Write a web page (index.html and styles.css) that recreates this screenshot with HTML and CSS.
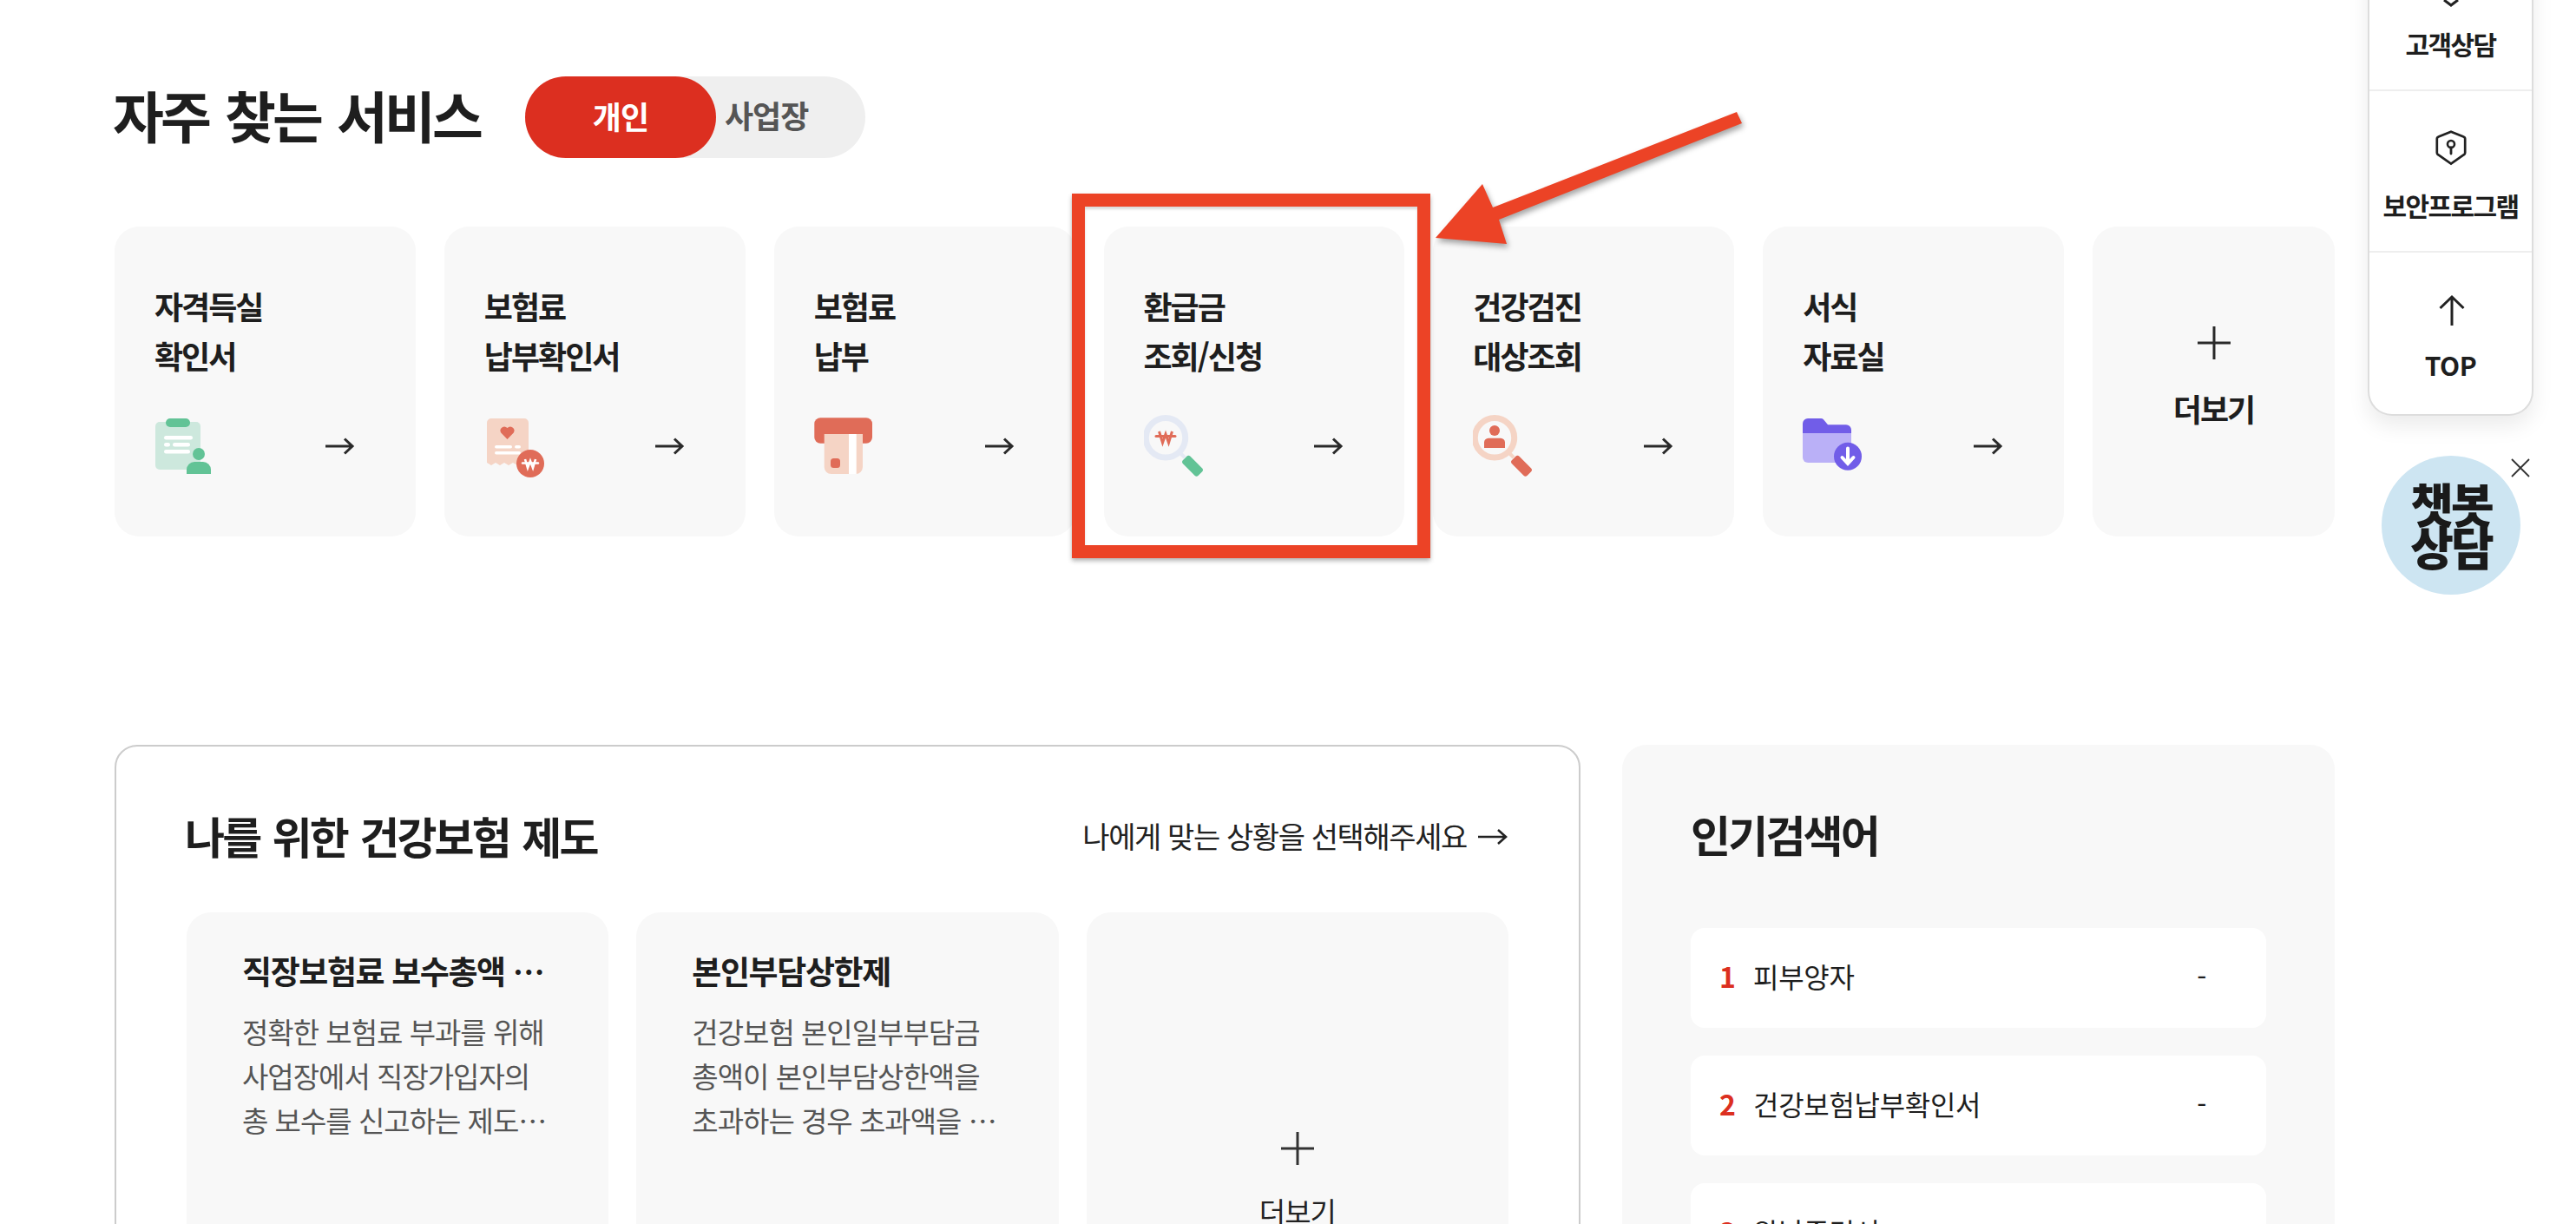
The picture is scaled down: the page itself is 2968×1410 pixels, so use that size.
FILE: index.html
```html
<!DOCTYPE html>
<html lang="ko">
<head>
    <meta charset="UTF-8">
    <meta name="viewport" content="width=device-width, initial-scale=1.0">
    <title>자주 찾는 서비스</title>
    <link rel="stylesheet" href="styles.css">
</head>
<body>
<div class="page">
    <!-- 자주 찾는 서비스 -->
    <section class="services">
        <div class="services-head">
            <h2 class="services-title">자주 찾는 서비스</h2>
            <div class="toggle">
                <span class="toggle-on">개인</span>
                <span class="toggle-off">사업장</span>
            </div>
        </div>
        <div class="service-grid">
            <a class="service-card">
                <strong>자격득실<br>확인서</strong>
                <div class="service-foot">
                    <svg class="service-icon" viewBox="0 0 72 72">
                        <rect x="1" y="8" width="52" height="55" rx="5" fill="#cde8dd"/>
                        <rect x="13" y="4" width="28" height="10" rx="5" fill="#62c396"/>
                        <g fill="#fff">
                            <rect x="11" y="24" width="33" height="4.6" rx="2.3"/>
                            <rect x="11" y="32" width="7" height="4.4" rx="2.2"/>
                            <rect x="21" y="32" width="20" height="4.4" rx="2.2"/>
                            <rect x="11" y="40" width="30" height="4.4" rx="2.2"/>
                        </g>
                        <circle cx="51" cy="45" r="7" fill="#62c396"/>
                        <path d="M37 68v-5a9 9 0 0 1 9-9h10a9 9 0 0 1 9 9v5z" fill="#62c396"/>
                    </svg>
                    <svg class="arrow-icon" viewBox="0 0 36 36"><path d="M2 18h31M24 9.500l9 8.500-9 8.500" fill="none" stroke="#2a2a2a" stroke-width="3"/></svg>
                </div>
            </a>
            <a class="service-card">
                <strong>보험료<br>납부확인서</strong>
                <div class="service-foot">
                    <svg class="service-icon" viewBox="0 0 72 72">
                        <path d="M3 9a5 5 0 0 1 5-5h38a5 5 0 0 1 5 5v46l-4 3-4-3-5 3-5-3-5 3-5-3-5 3-5-3-5 3-5-3z" fill="#f5d4c5"/>
                        <path d="M26.500 28l-7.300-7.500a4.600 4.600 0 0 1 7.300-5.500 4.600 4.600 0 0 1 7.300 5.500z" fill="#e06c58"/>
                        <g fill="#fff">
                            <rect x="12" y="35" width="20" height="3.600" rx="1.800"/>
                            <rect x="35" y="35" width="7" height="3.600" rx="1.800"/>
                            <rect x="12" y="42" width="30" height="3.600" rx="1.800"/>
                        </g>
                        <circle cx="53" cy="56" r="16" fill="#e06c58"/>
                        <path d="M47 51l3 10 3-8 3 8 3-10" fill="none" stroke="#fff" stroke-width="2.600"/>
                        <path d="M44 55.500h18" stroke="#fff" stroke-width="2.400" stroke-linecap="round"/>
                    </svg>
                    <svg class="arrow-icon" viewBox="0 0 36 36"><path d="M2 18h31M24 9.500l9 8.500-9 8.500" fill="none" stroke="#2a2a2a" stroke-width="3"/></svg>
                </div>
            </a>
            <a class="service-card">
                <strong>보험료<br>납부</strong>
                <div class="service-foot">
                    <svg class="service-icon" viewBox="0 0 72 72">
                        <rect x="0.300" y="3.300" width="66.700" height="29.400" rx="7" fill="#e06c58"/>
                        <path d="M11.700 22H56v38a8 8 0 0 1-8 8H19.700a8 8 0 0 1-8-8z" fill="#f5d4c5"/>
                        <rect x="40" y="22" width="8.700" height="46" fill="#fff"/>
                        <rect x="19" y="50" width="11" height="11" rx="3.500" fill="#e06c58"/>
                    </svg>
                    <svg class="arrow-icon" viewBox="0 0 36 36"><path d="M2 18h31M24 9.500l9 8.500-9 8.500" fill="none" stroke="#2a2a2a" stroke-width="3"/></svg>
                </div>
            </a>
            <a class="service-card">
                <strong>환급금<br>조회/신청</strong>
                <div class="service-foot">
                    <svg class="service-icon" viewBox="0 0 72 72">
                        <circle cx="25" cy="26.300" r="22.700" fill="none" stroke="#e4e9f4" stroke-width="7"/>
                        <path d="M41 43l6 6" stroke="#e4e9f4" stroke-width="4"/>
                        <rect x="43.500" y="52.700" width="25" height="12" rx="3" transform="rotate(45 56 58.700)" fill="#62c396"/>
                        <path d="M17.500 19l4 13 3.500-10 3.500 10 4-13" fill="none" stroke="#e06c58" stroke-width="3"/>
                        <path d="M14 24.500h22" stroke="#e06c58" stroke-width="3" stroke-linecap="round"/>
                    </svg>
                    <svg class="arrow-icon" viewBox="0 0 36 36"><path d="M2 18h31M24 9.500l9 8.500-9 8.500" fill="none" stroke="#2a2a2a" stroke-width="3"/></svg>
                </div>
            </a>
            <a class="service-card">
                <strong>건강검진<br>대상조회</strong>
                <div class="service-foot">
                    <svg class="service-icon" viewBox="0 0 72 72">
                        <circle cx="25" cy="26.300" r="22.700" fill="none" stroke="#f5d4c5" stroke-width="7"/>
                        <path d="M41 43l6 6" stroke="#f5d4c5" stroke-width="4"/>
                        <rect x="43.500" y="52.700" width="25" height="12" rx="3" transform="rotate(45 56 58.700)" fill="#e06c58"/>
                        <circle cx="25" cy="18" r="6" fill="#e06c58"/>
                        <path d="M13 38v-6a5 5 0 0 1 5-5.300h14a5 5 0 0 1 5 5.300v6z" fill="#e06c58"/>
                    </svg>
                    <svg class="arrow-icon" viewBox="0 0 36 36"><path d="M2 18h31M24 9.500l9 8.500-9 8.500" fill="none" stroke="#2a2a2a" stroke-width="3"/></svg>
                </div>
            </a>
            <a class="service-card">
                <strong>서식<br>자료실</strong>
                <div class="service-foot">
                    <svg class="service-icon" viewBox="0 0 72 72">
                        <path d="M0 20h56v29a6 6 0 0 1-6 6H6a6 6 0 0 1-6-6z" fill="#bab0f7"/>
                        <path d="M0 21V10a6 6 0 0 1 6-6h15a4 4 0 0 1 3 1.300L29 11.300h21a6 6 0 0 1 6 6V21z" fill="#715de8"/>
                        <circle cx="52" cy="47.700" r="16" fill="#715de8"/>
                        <path d="M52 38.500v17M45.500 49l6.500 7 6.500-7" fill="none" stroke="#fff" stroke-width="4" stroke-linecap="round"/>
                    </svg>
                    <svg class="arrow-icon" viewBox="0 0 36 36"><path d="M2 18h31M24 9.500l9 8.500-9 8.500" fill="none" stroke="#2a2a2a" stroke-width="3"/></svg>
                </div>
            </a>
            <a class="service-card service-more">
                <svg class="plus-icon" viewBox="0 0 40 40"><path d="M20 1v38M1 20h38" stroke="#2a2a2a" stroke-width="3"/></svg>
                <strong>더보기</strong>
            </a>
        </div>
    </section>

    <section class="lower">
        <!-- 나를 위한 건강보험 제도 -->
        <div class="system-panel">
            <div class="system-head">
                <h3 class="panel-title">나를 위한 건강보험 제도</h3>
                <a class="system-link">나에게 맞는 상황을 선택해주세요
                    <svg class="link-arrow" viewBox="0 0 36 24"><path d="M1 12h32M24 4l9 8-9 8" fill="none" stroke="#222" stroke-width="2.600"/></svg>
                </a>
            </div>
            <div class="system-grid">
                <div class="system-card">
                    <h4>직장보험료 보수총액 …</h4>
                    <p>정확한 보험료 부과를 위해<br>사업장에서 직장가입자의<br>총 보수를 신고하는 제도…</p>
                </div>
                <div class="system-card">
                    <h4>본인부담상한제</h4>
                    <p>건강보험 본인일부부담금<br>총액이 본인부담상한액을<br>초과하는 경우 초과액을 …</p>
                </div>
                <div class="system-card system-more">
                    <svg class="plus-icon" viewBox="0 0 40 40"><path d="M20 1v38M1 20h38" stroke="#333" stroke-width="3"/></svg>
                    <span>더보기</span>
                </div>
            </div>
        </div>

        <!-- 인기검색어 -->
        <div class="rank-panel">
            <h3 class="panel-title">인기검색어</h3>
            <ul class="rank-list">
                <li><b>1</b><span>피부양자</span><i>-</i></li>
                <li><b>2</b><span>건강보험납부확인서</span><i>-</i></li>
                <li><b>3</b><span>완납증명서</span><i>-</i></li>
            </ul>
        </div>
    </section>
</div>

<!-- 퀵메뉴 -->
<aside class="side-menu">
    <a class="side-item">
        <span class="side-icon"></span>
        <strong>고객상담</strong>
    </a>
    <a class="side-item">
        <svg class="side-icon" viewBox="0 0 48 48">
            <path d="M24 5l16 6.500a3 3 0 0 1 2 3V32a3 3 0 0 1-1.500 2.500L24 46 7.500 34.500A3 3 0 0 1 6 32V14.500a3 3 0 0 1 2-3z" transform="translate(2.400 2.200) scale(.9)" fill="none" stroke="#222" stroke-width="3"/>
            <circle cx="24" cy="21" r="4" fill="none" stroke="#222" stroke-width="2.600"/>
            <path d="M24 25v7" stroke="#222" stroke-width="2.800" stroke-linecap="round"/>
        </svg>
        <strong>보안프로그램</strong>
    </a>
    <a class="side-item side-top">
        <svg class="side-icon" viewBox="0 0 48 48"><path d="M25 49V15M11.500 28L25 15l13.500 13" fill="none" stroke="#222" stroke-width="3"/></svg>
        <strong>TOP</strong>
    </a>
</aside>
<svg class="side-peek" viewBox="0 0 24 8"><path d="M4 0l8 6 8-6" fill="none" stroke="#222" stroke-width="3"/></svg>

<!-- 챗봇 -->
<a class="chatbot">챗봇<br>상담</a>
<svg class="chatbot-close" viewBox="0 0 22 22"><path d="M1 1l20 20M21 1L1 21" stroke="#333" stroke-width="1.800"/></svg>

<!-- 캡처 위에 그려진 표시 -->
<div class="mark-box"></div>
<svg class="mark-arrow" viewBox="0 0 2968 1410">
    <polygon points="2001,129 2007,142 1727,253 1736,281 1654,274 1708,212 1720,239" fill="#ec4326"/>
</svg>
</body>
</html>
```

FILE: styles.css
```css
/* 공통 */
* { box-sizing: border-box; }

html, body {
    margin: 0;
    height: 1410px;
    overflow: hidden;
    background-color: #fff;
}

body {
    position: relative;
    font-family: "Noto Sans CJK KR", "Noto Sans", sans-serif;
    color: #1e1e1e;
}

h2, h3, h4, p, ul {
    margin: 0;
    padding: 0;
}

.page {
    width: 2558px;
    margin-left: 132px;
    padding-top: 88px;
}

/* 자주 찾는 서비스 */
.services-head {
    display: flex;
    align-items: center;
    gap: 52px;
}

.services-title {
    margin-left: -2px;
    padding-bottom: 8px;
    font-size: 64px;
    font-weight: 700;
    line-height: 86px;
    letter-spacing: -3.900px;
    word-spacing: 5px;
}

.toggle {
    position: relative;
    display: flex;
    align-items: center;
    width: 392px;
    height: 94px;
    border-radius: 47px;
    background-color: #efefef;
}

.toggle-on {
    width: 220px;
    height: 94px;
    padding-bottom: 4px;
    border-radius: 47px;
    background-color: #dc2f20;
    color: #fff;
    font-size: 36px;
    font-weight: 700;
    line-height: 90px;
    text-align: center;
    letter-spacing: -1px;
}

.toggle-off {
    margin-left: 10px;
    padding-bottom: 6px;
    color: #555;
    font-size: 36px;
    font-weight: 700;
    letter-spacing: -1px;
}

.service-grid {
    display: grid;
    grid-template-columns: repeat(6, 1fr) 279px;
    gap: 33px;
    margin-top: 79px;
}

.service-card {
    height: 357px;
    padding: 63px 0 0 46px;
    border-radius: 28px;
    background-color: #f8f8f8;
}

.service-card strong {
    display: block;
    font-size: 36px;
    font-weight: 700;
    line-height: 57px;
    letter-spacing: -2px;
}

.service-foot {
    display: flex;
    justify-content: space-between;
    align-items: center;
    margin-top: 40px;
    padding-right: 70px;
}

.service-icon {
    display: block;
    width: 72px;
    height: 72px;
}

.arrow-icon {
    display: block;
    width: 36px;
    height: 36px;
}

.plus-icon {
    display: block;
    width: 40px;
    height: 40px;
}

.service-more {
    display: flex;
    flex-direction: column;
    align-items: center;
    padding: 114px 0 0;
}

.service-more strong {
    margin-top: 27px;
}

/* 아래 영역 */
.lower {
    display: grid;
    grid-template-columns: 1689px 821px;
    gap: 48px;
    margin-top: 240px;
}

.panel-title {
    font-size: 50px;
    font-weight: 700;
    line-height: 60px;
    letter-spacing: -2.800px;
    word-spacing: 3px;
}

.system-panel {
    height: 700px;
    padding: 72px 81px 0;
    border: 2px solid #ccc;
    border-radius: 26px;
}

.system-head {
    display: flex;
    justify-content: space-between;
    align-items: center;
}

.system-head .panel-title {
    margin-left: -2px;
}

.system-link {
    display: flex;
    align-items: center;
    gap: 12px;
    font-size: 34px;
    letter-spacing: -1.400px;
    color: #222;
}

.link-arrow {
    display: block;
    width: 36px;
    height: 24px;
    margin-top: 3px;
}

.system-grid {
    display: grid;
    grid-template-columns: repeat(3, 1fr);
    gap: 32px;
    margin-top: 59px;
}

.system-card {
    height: 500px;
    padding: 43px 20px 0 64px;
    border-radius: 28px;
    background-color: #f8f8f8;
}

.system-card h4 {
    font-size: 37px;
    font-weight: 700;
    line-height: 48px;
    letter-spacing: -1.400px;
    white-space: nowrap;
}

.system-card p {
    margin-top: 21px;
    color: #555;
    font-size: 33px;
    line-height: 51px;
    letter-spacing: -1px;
    white-space: nowrap;
}

.system-more {
    display: flex;
    flex-direction: column;
    align-items: center;
    padding: 252px 0 0;
    font-size: 33px;
    color: #222;
}

.system-more span {
    margin-top: 28px;
    line-height: 48px;
    letter-spacing: -1px;
}

.rank-panel {
    height: 700px;
    padding: 72px 79px 0 79px;
    border-radius: 28px;
    background-color: #f8f8f8;
}

.rank-list {
    display: flex;
    flex-direction: column;
    gap: 32px;
    margin-top: 79px;
    list-style: none;
}

.rank-list li {
    display: flex;
    align-items: center;
    height: 115px;
    padding: 0 69px 5px 33px;
    border-radius: 16px;
    background-color: #fff;
    font-size: 32px;
    letter-spacing: -0.300px;
}

.rank-list b {
    width: 39px;
    color: #dc2f20;
    font-weight: 700;
}

.rank-list span {
    flex-grow: 1;
}

.rank-list i {
    font-style: normal;
}

/* 퀵메뉴 */
.side-menu {
    position: absolute;
    top: -81px;
    left: 2728px;
    width: 191px;
    border: 2px solid #ddd;
    border-top: none;
    border-radius: 0 0 28px 28px;
    background-color: #fff;
    box-shadow: 0 12px 24px rgba(0, 0, 0, 0.08);
}

.side-item {
    display: flex;
    flex-direction: column;
    align-items: center;
    height: 186px;
    padding-top: 40px;
    border-bottom: 2px solid #eee;
}

.side-item:last-child {
    border-bottom: none;
}

.side-item strong {
    margin-top: 27px;
    font-size: 30px;
    line-height: 32px;
    letter-spacing: -1.600px;
    white-space: nowrap;
}

.side-icon {
    display: block;
    width: 48px;
    height: 48px;
}

.side-top {
    padding-top: 36px;
}

.side-top strong {
    margin-top: 29px;
    letter-spacing: -0.500px;
}

.side-peek {
    position: absolute;
    top: 0;
    left: 2812px;
    width: 24px;
    height: 8px;
}

/* 챗봇 */
.chatbot {
    position: absolute;
    top: 525px;
    left: 2744px;
    width: 160px;
    height: 160px;
    padding-top: 30px;
    border-radius: 50%;
    background-color: #cde5f2;
    color: #1a1a1a;
    font-size: 54px;
    font-weight: 900;
    line-height: 49px;
    text-align: center;
    letter-spacing: -3px;
}

.chatbot-close {
    position: absolute;
    top: 528px;
    left: 2893px;
    width: 22px;
    height: 22px;
}

/* 표시 */
.mark-box {
    position: absolute;
    top: 223px;
    left: 1235px;
    width: 413px;
    height: 420px;
    border: 15px solid #ec4326;
    box-shadow: 0 3px 5px rgba(0, 0, 0, 0.3), inset 0 3px 3px rgba(0, 0, 0, 0.15);
}

.mark-arrow {
    position: absolute;
    top: 0;
    left: 0;
    width: 2968px;
    height: 1410px;
    filter: drop-shadow(2px 4px 3px rgba(0, 0, 0, 0.35));
}
```
